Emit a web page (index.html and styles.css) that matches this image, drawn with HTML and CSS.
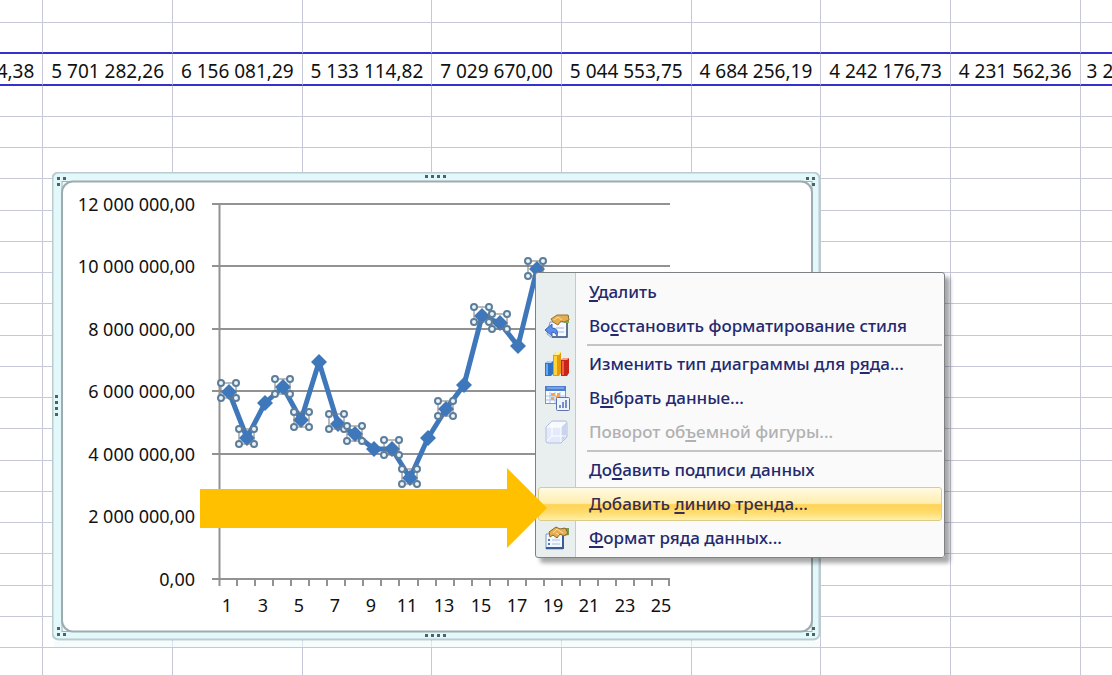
FILE: index.html
```html
<!DOCTYPE html>
<html lang="ru">
<head>
<meta charset="utf-8">
<title>Диаграмма</title>
<link rel="stylesheet" href="styles.css">
</head>
<body>
<main class="workspace">
  <table class="sheet">
    <colgroup><col class="col-first"><col class="col"><col class="col"><col class="col"><col class="col"><col class="col"><col class="col"><col class="col"><col class="col"><col></colgroup>
    <tbody id="rows">
      <tr><td></td><td></td><td></td><td></td><td></td><td></td><td></td><td></td><td></td><td></td></tr>
      <tr class="above-data"><td></td><td></td><td></td><td></td><td></td><td></td><td></td><td></td><td></td><td></td></tr>
      <tr class="data"><td><span class="cell">4,38</span></td><td>5 701 282,26</td><td>6 156 081,29</td><td>5 133 114,82</td><td>7 029 670,00</td><td>5 044 553,75</td><td>4 684 256,19</td><td>4 242 176,73</td><td>4 231 562,36</td><td class="cut">3 2</td></tr>
    </tbody>
  </table>

  <section class="chart" aria-label="Диаграмма">
    <svg class="chart-svg" viewBox="52 172 770 477">
      <rect class="halo" x="54" y="641" width="766" height="6"/>
      <rect class="frame" x="52.500" y="172.500" width="767" height="467" rx="6"/>
      <rect class="area-corner" x="62" y="181.500" width="750" height="450"/>
      <rect class="area" x="62" y="181.500" width="750" height="450" rx="11"/>
      <g class="dots">
        <path d="M57 177h3v3h-3zM63 177h3v3h-3zM57 183h3v3h-3z"/>
        <path d="M806 177h3v3h-3zM812 177h3v3h-3zM812 183h3v3h-3z"/>
        <path d="M57 627h3v3h-3zM57 633h3v3h-3zM63 633h3v3h-3z"/>
        <path d="M812 627h3v3h-3zM812 633h3v3h-3zM806 633h3v3h-3z"/>
        <path d="M425 175h3v3h-3zM431 175h3v3h-3zM437 175h3v3h-3zM443 175h3v3h-3z"/>
        <path d="M425 634h3v3h-3zM431 634h3v3h-3zM437 634h3v3h-3zM443 634h3v3h-3z"/>
        <path d="M55 395h3v3h-3zM55 401h3v3h-3zM55 407h3v3h-3zM55 413h3v3h-3z"/>
      </g>
      <path class="grid" d="M212 204h458M212 266h458M212 329h458M212 391h458M212 454h458M212 516h458M212 579h458M219.500 204v382"/>
      <path class="ticks" d="M237 579v7M255 579v7M273 579v7M291 579v7M309 579v7M327 579v7M345 579v7M363 579v7M381 579v7M399 579v7M418 579v7M436 579v7M454 579v7M472 579v7M490 579v7M508 579v7M526 579v7M544 579v7M562 579v7M580 579v7M598 579v7M616 579v7M634 579v7M652 579v7M669 579v7"/>
      <g class="labels-y">
        <text x="195" y="211">12 000 000,00</text><text x="195" y="273">10 000 000,00</text><text x="195" y="336">8 000 000,00</text><text x="195" y="398">6 000 000,00</text><text x="195" y="461">4 000 000,00</text><text x="195" y="523">2 000 000,00</text><text x="195" y="586">0,00</text>
      </g>
      <g class="labels-x">
        <text x="227" y="612">1</text><text x="263" y="612">3</text><text x="299" y="612">5</text><text x="335" y="612">7</text><text x="371" y="612">9</text><text x="407" y="612">11</text><text x="444" y="612">13</text><text x="481" y="612">15</text><text x="517" y="612">17</text><text x="553" y="612">19</text><text x="589" y="612">21</text><text x="625" y="612">23</text><text x="661" y="612">25</text>
      </g>
      <g id="series"></g>
    </svg>
  </section>

  <div class="menu" role="menu">
    <button class="item" role="menuitem"><span class="icon"></span><span><u>У</u>далить</span></button>
    <button class="item" role="menuitem"><span class="icon">
      <svg viewBox="0 0 26 26"><path d="M6 9h17v15H7l-4-3z" fill="#f6f9ff" stroke="#8b9cbf"/><path d="M23 10v14H8" fill="none" stroke="#3f5680" stroke-width="1.500"/><path d="M12 15h8M12 19h8" stroke="#9cb5df"/><path d="M17 2h8v8h-5z" fill="#7eaa56"/><path d="M7 6l6-4h11l1 5-5 2-3-1-3 4-5-3z" fill="#e3ad50" stroke="#9a722f"/><path d="M10 7l4-3 4 3" fill="none" stroke="#fae09a"/><path d="M1 17l7-6v4q7 0 5 8-1-4-5-4v4z" fill="#5b8dea" stroke="#3b62b6"/></svg></span><span>Во<u>с</u>становить форматирование стиля</span></button>
    <hr>
    <button class="item" role="menuitem"><span class="icon">
      <svg viewBox="0 0 26 26"><path d="M1 12l3-2h5v13l-2 2H1z" fill="#2d72c5"/><path d="M1 12l3-2h5l-2 2z" fill="#a9d2fb"/><path d="M2 13h2v11H2z" fill="#69aaf0"/><path d="M9 4l3-3h5v21l-2 3H9z" fill="#e99a09"/><path d="M9 4l3-3h5l-2 3z" fill="#fff09b"/><path d="M10 5h3v19h-3z" fill="#ffd23c"/><path d="M17 9l3-2h5v15l-2 3h-6z" fill="#c52618"/><path d="M17 9l3-2h5l-2 2z" fill="#ff9c83"/><path d="M18 10h2v14h-2z" fill="#f75e42"/></svg></span><span>Изменить тип диаграммы для р<u>я</u>да...</span></button>
    <button class="item" role="menuitem"><span class="icon">
      <svg viewBox="0 0 26 26"><rect x="1.500" y="1.500" width="20" height="17" fill="#f8fbff" stroke="#7597d0"/><path d="M1 1h21v5H1z" fill="#4e7ed1"/><path d="M3 3h17" stroke="#a6c6f5"/><path d="M2 11h19M2 15h19M6 7v11M11 7v11M16 7v11" stroke="#adc3e6"/><path d="M7 8h4v3H7zM12 11h4v3h-4zM13 8h3v3h-3zM7 12h3v3H7z" fill="#f3a552"/><rect x="12.500" y="12.500" width="13" height="13" rx="1" fill="#edf3ff" stroke="#5d74ab"/><path d="M15 23v-3h2v3zM18 23v-6h2v6zM21 23v-8h2v8z" fill="#7890c5"/></svg></span><span>В<u>ы</u>брать данные...</span></button>
    <button class="item" role="menuitem" disabled><span class="icon">
      <svg viewBox="0 0 26 26"><path d="M2 8l6-6h13q2 0 2 2v14l-6 6H4q-2 0-2-2z" fill="#e4eafa" stroke="#b4c1de"/><path d="M3 8l5-5h14l-5 5z" fill="#f7f9ff"/><path d="M17 8l5-5v15l-5 5z" fill="#c9d4ed"/><path d="M3 8h14v15M17 8l5-5M8 3v14l-5 5M8 17h14" fill="none" stroke="#fff"/></svg></span><span>Поворот об<u>ъ</u>емной фигуры...</span></button>
    <hr>
    <button class="item" role="menuitem"><span class="icon"></span><span>До<u>б</u>авить подписи данных</span></button>
    <button class="item active" role="menuitem"><span class="icon"></span><span>Добавить <u>л</u>инию тренда...</span></button>
    <button class="item" role="menuitem"><span class="icon">
      <svg viewBox="0 0 26 26"><path d="M2 9h17v15H2z" fill="#f2f7ff" stroke="#7f9bc6"/><path d="M2 23h17V10" fill="none" stroke="#3a5d91" stroke-width="2"/><path d="M4 15h2M4 19h2" stroke="#4c79bd" stroke-width="2"/><path d="M8 15h8M8 19h8" stroke="#a6c0e5"/><path d="M18 3h7v7l-6 1z" fill="#739d56"/><path d="M5 7l7-5 4 2 5-1 3 5-4 3-4-2-3 4-4-3-3 2z" fill="#e5ae51" stroke="#8c642b"/><path d="M9 8l4-4 6 4M12 8l3 2" fill="none" stroke="#fbe0a2"/></svg></span><span><u>Ф</u>ормат ряда данных...</span></button>
  </div>

  <svg class="arrow" viewBox="0 0 347 80" aria-hidden="true"><path d="M0 21h307V0l40 40-40 40V60H0z"/></svg>
</main>
<script src="chart.js"></script>
</body>
</html>
```
FILE: styles.css
```css
* { box-sizing: border-box; }

body {
  margin: 0;
  background: #fff;
  font-family: "Noto Sans", "Open Sans", sans-serif;
}

.workspace {
  position: relative;
  height: 100vh;
  overflow: hidden;
}

/* Worksheet */
.sheet {
  width: 100%;
  table-layout: fixed;
  border-spacing: 0;
}

.col-first { width: 3.9%; }
.col { width: 11.66%; }

.sheet td {
  height: 31px;
  padding: 0 8px;
  border-right: 1px solid #c6c8da;
  border-bottom: 1px solid #c6c8da;
  font-size: 19px;
  line-height: 26px;
  text-align: right;
  white-space: nowrap;
  color: #111;
}

.sheet tr:first-child td { height: 23px; }
.sheet tr:nth-child(4n+3) td { height: 32px; }
.sheet td:last-child { border-right: 0; }
.sheet .above-data td { border-bottom: 2px solid #3431cc; }
.sheet .data td { padding-top: 4px; padding-left: 0; border-bottom: 2px solid #3431cc; }
.sheet .data .cut { padding-left: 6px; text-align: left; }
.cell { float: right; }

/* Chart */
.chart {
  position: absolute;
  left: 52px;
  top: 172px;
  width: 770px;
}

.chart-svg { display: block; width: 100%; }
.halo { fill: #ecfafa; opacity: 0.6; }
.frame { fill: #e2f8fa; stroke: #b9ccd0; stroke-width: 2; }
.area-corner { fill: #eefafa; stroke: #a3b4b8; }
.area { fill: #fff; stroke: #9dacb0; stroke-width: 2; }
.dots { fill: #4a6568; }
.grid, .ticks { fill: none; stroke: #929292; stroke-width: 2; }
.labels-y, .labels-x { font-size: 18px; fill: #111; }
.labels-y { text-anchor: end; }
.labels-x { text-anchor: middle; }
.line { fill: none; stroke: #3f77bb; stroke-width: 5; stroke-linejoin: round; }
.marker { fill: #3f77bb; }
.handle-box { fill: none; stroke: #777; stroke-width: 1; }
.handle { fill: #e8f6fc; stroke: #5e7d99; stroke-width: 2; }

/* Context menu */
.menu {
  position: absolute;
  left: 535px;
  top: 272px;
  width: 410px;
  padding: 2px;
  border: 1px solid #7f8284;
  border-radius: 3px;
  background: linear-gradient(90deg, #e9eeee 39px, #c3cacb 39px, #c3cacb 40px, #fafafa 40px);
  box-shadow: 5px 5px 4px rgba(0, 0, 0, 0.35);
}

.item {
  display: flex;
  align-items: center;
  gap: 13px;
  width: 100%;
  height: 34px;
  padding: 0 2px 0 5px;
  border: 1px solid transparent;
  border-radius: 3px;
  background: none;
  color: #24296f;
  font-family: "Noto Sans", "Open Sans", sans-serif;
  font-size: 17px;
  font-weight: 500;
  line-height: 24px;
  text-align: left;
  white-space: nowrap;
}

.item:disabled { color: #b1b1b1; }

.item.active {
  border-color: #dccb8b;
  background: linear-gradient(#fffbe2, #ffeeb0 48%, #ffd357 52%, #ffdb6b 75%, #fff0a8);
  color: #3a2d50;
}

.icon { flex: none; width: 32px; }
.icon svg { display: block; width: 26px; height: 26px; }
.item u { text-underline-offset: 2px; text-decoration-thickness: 2px; text-decoration-skip-ink: none; }

.menu hr {
  height: 2px;
  margin: 1px 0 1px 49px;
  border: 0;
  background: #c2c4c6;
}

/* Callout arrow */
.arrow {
  position: absolute;
  left: 200px;
  top: 468px;
  width: 347px;
  fill: #ffc000;
}
```
FILE: chart.js
```js
const rows = document.getElementById('rows');
for (let r = 0; r < 19; r++) {
  const row = rows.insertRow();
  for (let c = 0; c < 10; c++) row.insertCell();
}

const points = [
  [229, 392], [247, 438], [265, 403], [283, 387], [301, 420], [319, 362],
  [338, 424], [355, 434], [374, 449], [392, 449], [410, 478], [428, 438],
  [446, 409], [464, 385], [482, 316], [500, 323], [518, 346], [537, 269]
];
const selected = [
  [228, 390], [246, 436], [282, 386], [301, 419], [336, 421], [354, 433],
  [391, 447], [409, 476], [445, 408], [481, 314], [499, 321], [535, 268]
];

let shapes = `<polyline class="line" points="${points.join(' ')}"/>`;
for (const [x, y] of points) {
  shapes += `<path class="marker" d="M${x - 8} ${y}l8-8 8 8-8 8z"/>`;
}
for (const [x, y] of selected) {
  shapes += `<rect class="handle-box" x="${x - 7}" y="${y - 7}" width="15" height="15"/>`;
  for (const [dx, dy] of [[-7, -7], [8, -7], [-7, 8], [8, 8]]) {
    shapes += `<circle class="handle" cx="${x + dx}" cy="${y + dy}" r="3"/>`;
  }
}
document.getElementById('series').innerHTML = shapes;
```
